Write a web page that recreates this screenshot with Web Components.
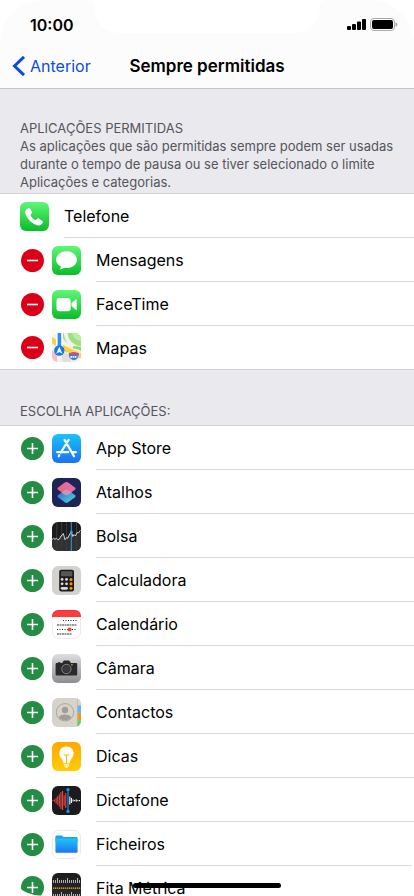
<!DOCTYPE html>
<html lang="pt">
<head>
<meta charset="utf-8">
<meta name="viewport" content="width=device-width, initial-scale=1">
<title>Sempre permitidas</title>
<style>
body {
  margin: 0;
  background: #fff;
  color: #000;
  font-family: Inter, 'Liberation Sans', sans-serif;
  font-size: 16px;
}
</style>
</head>
<body>

<phone-screen>
  <status-bar slot="top">10:00</status-bar>
  <nav-bar slot="top" back="Anterior">Sempre permitidas</nav-bar>

  <app-group>
    <span slot="title">Aplicações permitidas</span>
    <span slot="note">As aplicações que são permitidas sempre podem ser usadas durante o tempo de pausa ou se tiver selecionado o limite Aplicações e categorias.</span>
    <app-row icon="phone">Telefone</app-row>
    <app-row icon="messages" action="remove">Mensagens</app-row>
    <app-row icon="facetime" action="remove">FaceTime</app-row>
    <app-row icon="maps" action="remove">Mapas</app-row>
  </app-group>

  <app-group>
    <span slot="title">Escolha aplicações:</span>
    <app-row icon="appstore" action="add">App Store</app-row>
    <app-row icon="shortcuts" action="add">Atalhos</app-row>
    <app-row icon="stocks" action="add">Bolsa</app-row>
    <app-row icon="calculator" action="add">Calculadora</app-row>
    <app-row icon="calendar" action="add">Calendário</app-row>
    <app-row icon="camera" action="add">Câmara</app-row>
    <app-row icon="contacts" action="add">Contactos</app-row>
    <app-row icon="tips" action="add">Dicas</app-row>
    <app-row icon="voice" action="add">Dictafone</app-row>
    <app-row icon="files" action="add">Ficheiros</app-row>
    <app-row icon="measure" action="add">Fita Métrica</app-row>
  </app-group>
</phone-screen>

<script>
// repeated marks: one rect per x position
const bars = (list, fill, width = 1) => list.map(([x, y, h]) =>
  `<rect x="${x}" y="${y}" width="${width}" height="${h}" fill="${fill}"/>`).join('');

const dots = (from, to, step, y, size, fill) => {
  let out = '';
  for (let x = from; x <= to; x += step) {
    out += `<rect x="${x}" y="${y}" width="${size}" height="${size}" fill="${fill}"/>`;
  }
  return out;
};

const gradient = (top, bottom) => `
  <defs><linearGradient id="bg" x1="0" y1="0" x2="0" y2="1">
    <stop offset="0" stop-color="${top}"/><stop offset="1" stop-color="${bottom}"/>
  </linearGradient></defs>
  <rect width="29" height="29" fill="url(#bg)"/>`;

const ICONS = {
  phone: `${gradient('#5ff777', '#0abc29')}
    <path fill="#fff" d="M8 6.300c1-.6 1.800-.3 2.300.5l1.600 2.700c.4.8.3 1.400-.3 2l-.7.7c-.4.4-.4.8-.2 1.200 1 2 2.500 3.500 4.400 4.500.4.2.8.2 1.200-.2l.9-.9c.6-.5 1.200-.6 1.900-.1l3 2c.8.5 1 1.200.5 2-1.100 2-3 3.100-5.300 2.600C12.100 22 6.500 16.700 5.300 11.300c-.5-2.200.7-4 2.700-5z"/>`,

  messages: `${gradient('#5ff777', '#0abc29')}
    <path fill="#fff" d="M14.500 5.300c5.800 0 10.400 3.700 10.400 8.400s-4.600 8.400-10.400 8.400c-.9 0-1.800-.1-2.600-.3-1.100 1-2.800 1.700-4.500 1.700 1-.7 1.500-1.700 1.500-2.900-2.900-1.500-4.800-4-4.800-6.900 0-4.700 4.600-8.400 10.400-8.400z"/>`,

  facetime: `${gradient('#5ff777', '#0abc29')}
    <rect x="4.500" y="8" width="14.200" height="13.200" rx="3" fill="#fff"/>
    <path fill="#fff" d="M19.500 13.100l4.200-3.600c.5-.4 1-.2 1 .4v9.400c0 .6-.5.8-1 .4l-4.200-3.600z"/>`,

  maps: `<rect width="29" height="29" fill="#f4f1e9"/>
    <path fill="#9fe07e" d="M10 0h19v14.500L22 13l-8-4-4-5z"/>
    <path fill="none" stroke="#f2f1ed" stroke-width="3.600" d="M13.500-1c.5 9 6 15 17 16.500"/>
    <path fill="#bdebaa" d="M20 0h9v8c-5-1-8-4-9-8z"/>
    <path fill="#f8bcc8" d="M0 17l5 5v7H0z"/>
    <path fill="#e0dfda" d="M10 18l9 5v6h-9z"/>
    <path fill="none" stroke="#fdd037" stroke-width="5" d="M-1 6c7 6 13 10 19 12s9 3 13 7"/>
    <path fill="#8bd970" d="M21 15.500c3 .3 6 1 8 2.500v-4c-3-.6-6-.8-8-1z"/>
    <path fill="#fff" d="M4 0h7v14H4z"/>
    <path fill="#2d8ff3" d="M5.600 0h3.600v14H5.600z"/>
    <circle cx="7.300" cy="17.500" r="5.200" fill="#167ce4"/>
    <path fill="#fff" d="M7.300 13.700l3.100 7-3.100-1.700-3.100 1.700z"/>
    <path fill="#3b82d8" stroke="#fff" stroke-width=".7" d="M16.600 19.500c1.500.5 2.500-.5 5.200-.5s3.700 1 5.200.5c.9 4-.8 7.200-5.200 8.200-4.400-1-6.100-4.200-5.200-8.200z"/>
    <path fill="#e4475e" d="M17 19.800c1.500.3 2.500-.5 4.800-.5s3.300.8 4.800.5l.1 1.900h-9.800z"/>
    <path stroke="#fff" stroke-width="1.800" stroke-dasharray="1.600 .6" d="M18.400 23.900h6.800"/>`,

  appstore: `${gradient('#1ac4fb', '#1d70f2')}
    <g fill="none" stroke="#fff" stroke-width="2.200" stroke-linecap="round">
      <path d="M12.600 5.900l9.400 16.300M16.600 5.900L8.800 18.500M7.300 21.200l-.6 1.100M5.200 18.200h11M20.600 18.200h3.200"/>
    </g>`,

  shortcuts: `<defs>
      <linearGradient id="low" x1="0" y1="0" x2="1" y2="1">
        <stop offset="0" stop-color="#3a55c8"/><stop offset=".5" stop-color="#3e9fe0"/><stop offset="1" stop-color="#4fe0b0"/>
      </linearGradient>
      <linearGradient id="high" x1="0" y1="1" x2="1" y2="0">
        <stop offset="0" stop-color="#f0625a"/><stop offset="1" stop-color="#df6fcb"/>
      </linearGradient>
    </defs>
    <rect width="29" height="29" fill="#1d2456"/>
    <path fill="url(#low)" d="M13 12.100c.9-.6 2.100-.6 3 0l6.900 5c.9.700.9 1.400 0 2.100l-6.700 5c-1.100.8-2.300.8-3.400 0l-6.700-5c-.9-.7-.9-1.400 0-2.100z"/>
    <path fill="url(#high)" d="M12.800 4.600c1.100-.8 2.300-.8 3.400 0l6.700 5c.9.700.9 1.400 0 2.100l-6.700 5c-1.100.8-2.300.8-3.400 0l-6.700-5c-.9-.7-.9-1.400 0-2.100z"/>
    <path fill="#b9a3c9" opacity=".8" d="M13 12.100c.9-.6 2.100-.6 3 0l3.800 2.400-3.600 2.200c-1.100.8-2.300.8-3.400 0l-3.400-2.100z"/>`,

  stocks: `<rect width="29" height="29" fill="#1b1b1d"/>
    ${bars([[4.5, 0, 29], [9.4, 0, 29], [14.3, 0, 29], [24.2, 0, 29]], '#48484b', .7)}
    <path fill="#3b3b3e" opacity=".7" d="M0 17l3-1 3 1 3-2 2-2 2 5 3-4 3-4 3 5 3-2 4-3v19H0z"/>
    <path stroke="#2f9ae8" stroke-width="1" d="M19.300 0v29"/>
    <path fill="none" stroke="#e8e8e8" stroke-width=".9" d="M0 17.500l1.500-1.200 1.500 1 1.500-1 1.500 1.600 1.500-1 1.500-3 1-.4 1.300-2 1.700 6.200 1.500-2 1.300.5 2-4.200 1.500-2 1.500 4.500 1.200-2 1.500 1.500 1.500-3.500 1.500.5 2-2.800"/>
    <circle cx="19.300" cy="10" r="1.500" fill="#2f9ae8"/>`,

  calculator: `<rect width="29" height="29" fill="#d3d2cf"/>
    <rect x="7.200" y="3.700" width="14.800" height="21.800" rx="2" fill="#1d1d1f"/>
    <rect x="8.900" y="5.300" width="11.400" height="4.900" rx=".8" fill="#57575a"/>
    <g fill="#dadada">
      <circle cx="10.100" cy="13.400" r="1.400"/><circle cx="14.500" cy="13.400" r="1.400"/>
      <circle cx="10.100" cy="17.800" r="1.400"/><circle cx="14.500" cy="17.800" r="1.400"/>
      <rect x="8.700" y="20.900" width="7.200" height="2.800" rx="1.400"/>
    </g>
    <g fill="#ff9500"><circle cx="19" cy="13.400" r="1.500"/><circle cx="19" cy="17.800" r="1.500"/><circle cx="19" cy="22.300" r="1.500"/></g>`,

  calendar: `<rect width="29" height="29" fill="#fff"/>
    <rect width="29" height="7" fill="#fc3d39"/>
    ${dots(11, 24, 2.5, 10, 1, '#222')}
    ${dots(5, 24, 2.5, 14, 2, '#999')}
    ${dots(5, 24, 2.5, 19, 1, '#222')}
    ${dots(5, 17.5, 2.5, 23, 2, '#999')}
    <circle cx="17.600" cy="19.500" r="2" fill="#fc3d39"/>
    <rect x=".5" y=".5" width="28" height="28" rx="6" fill="none" stroke="#000" stroke-opacity=".08"/>`,

  camera: `${gradient('#dedee0', '#8e8e92')}
    <path fill="#2a2a2c" d="M4.900 9h1V8.300h2.600V9h1c.7 0 1-.4 1.300-1l.4-.8c.3-.6.6-.8 1.200-.8h4.200c.6 0 .9.200 1.200.8l.4.8c.3.600.6 1 1.300 1h4.400c.8 0 1.300.5 1.300 1.300v10c0 .8-.5 1.300-1.300 1.300H4.900c-.8 0-1.300-.5-1.300-1.300v-10c0-.8.5-1.300 1.300-1.300z"/>
    <circle cx="14.400" cy="15" r="4.600" fill="none" stroke="#a2a2a5" stroke-width=".8"/>
    <circle cx="14.400" cy="15" r="3.200" fill="#3a3a3d"/>
    <circle cx="19.900" cy="10.700" r=".8" fill="#f4b62c"/>`,

  contacts: `<rect width="29" height="29" fill="#d5d3ca"/>
    <circle cx="13" cy="14.300" r="8.700" fill="none" stroke="#a9a69e"/>
    <circle cx="13" cy="12" r="3.200" fill="#a19e96"/>
    <path fill="#a19e96" d="M6.800 19.600c.7-2 3-3.200 6.200-3.200s5.500 1.200 6.200 3.200c-1.500 1.900-3.700 2.800-6.200 2.800s-4.700-.9-6.200-2.800z"/>
    <path fill="#b3b1aa" d="M25 0h.7v29H25z"/>
    <path fill="#d5d3ca" d="M25.700 0H29v7.500h-3.300z"/>
    <path fill="#5bb9f6" d="M25.700 7.500H29v7.200h-3.300z"/>
    <path fill="#fb9614" d="M25.700 14.900H29V22h-3.300z"/>
    <path fill="#4fd65e" d="M25.700 22.200H29V29h-3.300z"/>`,

  tips: `${gradient('#ffa800', '#ffcd08')}
    <path fill="#fff" d="M14.500 4.500c4.300 0 7.200 3.100 7.200 6.900 0 2.600-1.300 4-2.400 5.500-.9 1.200-1.200 2.200-1.500 3.600-.1.500-.4.800-.9.800h-4.800c-.5 0-.8-.3-.9-.8-.3-1.400-.6-2.400-1.500-3.600-1.100-1.500-2.400-2.900-2.400-5.500 0-3.800 2.900-6.900 7.200-6.900z"/>
    <path fill="none" stroke="#ffb900" stroke-width="1.100" stroke-linecap="round" d="M12 13h5M14.500 13v8.300"/>
    <path fill="#fff" d="M11.900 22.200h5.200v1.200h-5.200zM12.400 24.200h4.200c-.3 1-1.100 1.400-2.100 1.400s-1.800-.4-2.100-1.400z"/>`,

  voice: `<rect width="29" height="29" fill="#1b1b1d"/>
    ${bars([[.4, 14, 1], [2, 13.4, 2.2], [3.6, 11.6, 5.8], [5.2, 10, 9], [6.800, 8.2, 12.6], [8.4, 6, 17], [10, 5, 19], [11.6, 9.4, 10.2], [13.2, 7, 15]], '#e2463e', 1.1)}
    ${bars([[17.3, 10.5, 8], [18.9, 12, 5], [20.5, 13.5, 2], [22.1, 14, 1.2], [23.7, 13.3, 2.4], [25.3, 14, 1.2], [26.9, 14, 1.2]], '#f2f2f2', 1.1)}
    <path stroke="#1e8fe6" stroke-width="1.200" d="M16 3.500v22"/>
    <circle cx="16" cy="3.600" r="1.700" fill="#1e8fe6"/><circle cx="16" cy="25.400" r="1.700" fill="#1e8fe6"/>`,

  files: `<defs><linearGradient id="folder" x1="0" y1="0" x2="0" y2="1">
      <stop offset="0" stop-color="#21c3fb"/><stop offset="1" stop-color="#1e74f2"/>
    </linearGradient></defs>
    <rect width="29" height="29" fill="#fff"/>
    <path fill="#1ba5e8" d="M3.400 7c0-.9.500-1.400 1.400-1.400h4.500c.6 0 .9.200 1.300.6l.5.500c.3.300.6.400 1.100.4h12c.9 0 1.400.5 1.400 1.400V12H3.400z"/>
    <path fill="url(#folder)" d="M3.400 8.500h22.200v12.700c0 1-.6 1.600-1.600 1.600H5c-1 0-1.600-.6-1.600-1.600z"/>
    <rect x=".5" y=".5" width="28" height="28" rx="6" fill="none" stroke="#000" stroke-opacity=".08"/>`,

  measure: `${gradient('#1c1c1e', '#2c2c2e')}
    ${bars([[1, 7, 3], [3, 7, 3], [5, 5, 5], [7, 7, 3], [9, 7, 3], [11, 7, 3], [13, 7, 3], [15, 5, 5], [17, 7, 3], [19, 7, 3], [21, 7, 3], [23, 7, 3], [25, 5, 5], [27, 7, 3]], '#d8d8d8', .8)}
    ${dots(1, 27, 2, 14.5, 1.3, '#e8b51c')}
    ${bars([[1, 21, 3], [3, 21, 3], [5, 21, 3], [7, 21, 3], [9, 19, 5], [11, 21, 3], [13, 21, 3], [15, 21, 3], [17, 21, 3], [19, 19, 5], [21, 21, 3], [23, 21, 3], [25, 21, 3], [27, 21, 3]], '#d8d8d8', .8)}`
};

class PhoneScreen extends HTMLElement {
  constructor() {
    super();
    this.attachShadow({mode: 'open'}).innerHTML = `
    <style>
    :host {
      display: block;
      position: relative;
      height: 100vh;
      overflow: hidden;
      border-radius: 44px;
      background: #fff;
    }

    header {
      position: relative;
      background: #fcfcfc;
      border-bottom: 1px solid #c4c4c8;
    }

    .notch {
      position: absolute;
      top: 0;
      left: 50%;
      transform: translateX(-50%);
    }

    .home {
      position: absolute;
      bottom: 8px;
      left: 50%;
      width: 148px;
      height: 5px;
      border-radius: 3px;
      background: #000;
      transform: translateX(-50%);
    }
    </style>
    <header>
      <svg class="notch" width="240" height="34" viewBox="0 0 240 34" aria-hidden="true">
        <path fill="#fff" d="M0 0c6 0 8 3 8 8 0 15 10 25 25 25h174c15 0 25-10 25-25 0-5 2-8 8-8z"/>
      </svg>
      <slot name="top"></slot>
    </header>
    <main><slot></slot></main>
    <div class="home"></div>
    `;
  }
}

class StatusBar extends HTMLElement {
  constructor() {
    super();
    this.attachShadow({mode: 'open'}).innerHTML = `
    <style>
    :host {
      display: flex;
      position: relative;
      align-items: center;
      justify-content: space-between;
      height: 44px;
      padding: 6px 16px 0 30px;
      box-sizing: border-box;
      font-weight: 600;
    }

    svg {
      display: block;
    }
    </style>
    <span><slot></slot></span>
    <svg width="51" height="14" viewBox="0 0 51 14" aria-hidden="true">
      <rect x="0" y="8" width="4" height="4" rx="1"/>
      <rect x="5" y="6" width="4" height="6" rx="1"/>
      <rect x="10" y="3.500" width="4" height="8.500" rx="1"/>
      <rect x="15" y="1" width="4" height="11" rx="1"/>
      <rect x="23.500" y=".5" width="24" height="12" rx="3.500" fill="#fff" stroke="#a8a8a8"/>
      <rect x="25" y="2" width="21" height="9" rx="2"/>
      <path fill="#a8a8a8" d="M48.500 4.500c1.300.4 2 1.200 2 2s-.7 1.600-2 2z"/>
    </svg>
    `;
  }
}

class NavBar extends HTMLElement {
  constructor() {
    super();
    this.attachShadow({mode: 'open'}).innerHTML = `
    <style>
    :host {
      display: grid;
      position: relative;
      grid-template-columns: 1fr auto 1fr;
      align-items: center;
      height: 44px;
      padding: 0 12px;
      box-sizing: border-box;
    }

    a {
      display: flex;
      align-items: center;
      gap: 4px;
      color: #0a4be0;
      text-decoration: none;
    }

    h1 {
      margin: 0;
      font-size: 17px;
      font-weight: 600;
    }
    </style>
    <a href="#">
      <svg width="14" height="22" viewBox="0 0 14 22" aria-hidden="true">
        <path d="M12 1.800L2.500 11l9.500 9.200" fill="none" stroke="currentColor" stroke-width="3"/>
      </svg>
      <span>${this.getAttribute('back')}</span>
    </a>
    <h1><slot></slot></h1>
    `;
  }
}

class AppGroup extends HTMLElement {
  constructor() {
    super();
    this.attachShadow({mode: 'open'}).innerHTML = `
    <style>
    :host {
      display: block;
    }

    header {
      padding: 30px 20px 2px;
      background: #eae9ee;
      border-bottom: 1px solid #d2d2d5;
      color: #55555a;
      font-size: 13px;
      line-height: 18px;
    }

    :host(:last-child) header {
      padding-top: 32px;
      padding-bottom: 5px;
    }

    h2 {
      margin: 0;
      font-size: 13px;
      font-weight: 400;
      text-transform: uppercase;
    }

    p {
      margin: 0;
    }
    </style>
    <header>
      <h2><slot name="title"></slot></h2>
      <p><slot name="note"></slot></p>
    </header>
    <div role="list"><slot></slot></div>
    `;
  }
}

class AppRow extends HTMLElement {
  constructor() {
    super();
    const action = this.getAttribute('action');
    const name = this.textContent;
    const sign = action === 'add' ? 'M6 11.500h11M11.500 6v11' : 'M6 11.500h11';
    const label = action === 'add' ? 'Adicionar' : 'Remover';
    const button = action ? `
    <button class="${action}" aria-label="${label} ${name}">
      <svg width="23" height="23" viewBox="0 0 23 23"><path d="${sign}" stroke="#fff" stroke-width="1.600"/></svg>
    </button>` : '';

    this.attachShadow({mode: 'open'}).innerHTML = `
    <style>
    :host {
      display: flex;
      align-items: center;
      height: 44px;
      padding-left: 20px;
      background: #fff;
    }

    :host(:last-child) {
      border-bottom: 1px solid #d2d2d5;
      box-sizing: border-box;
    }

    button {
      flex: none;
      width: 23px;
      height: 23px;
      margin: 0 8px 0 1px;
      padding: 0;
      border: none;
      border-radius: 50%;
    }

    button svg {
      display: block;
    }

    .remove {
      background: #db0017;
    }

    .add {
      background: #258d43;
    }

    .icon {
      flex: none;
      display: block;
      border-radius: 6px;
    }

    .name {
      flex: 1;
      display: flex;
      align-items: center;
      align-self: stretch;
      margin-left: 15px;
      border-bottom: 1px solid #d8d8db;
    }

    :host(:last-child) .name {
      border-bottom: none;
    }
    </style>
    ${button}
    <svg class="icon" width="29" height="29" viewBox="0 0 29 29" aria-hidden="true">${ICONS[this.getAttribute('icon')]}</svg>
    <span class="name"><slot></slot></span>
    `;
    this.setAttribute('role', 'listitem');
  }
}

customElements.define('phone-screen', PhoneScreen);
customElements.define('status-bar', StatusBar);
customElements.define('nav-bar', NavBar);
customElements.define('app-group', AppGroup);
customElements.define('app-row', AppRow);
</script>
</body>
</html>
